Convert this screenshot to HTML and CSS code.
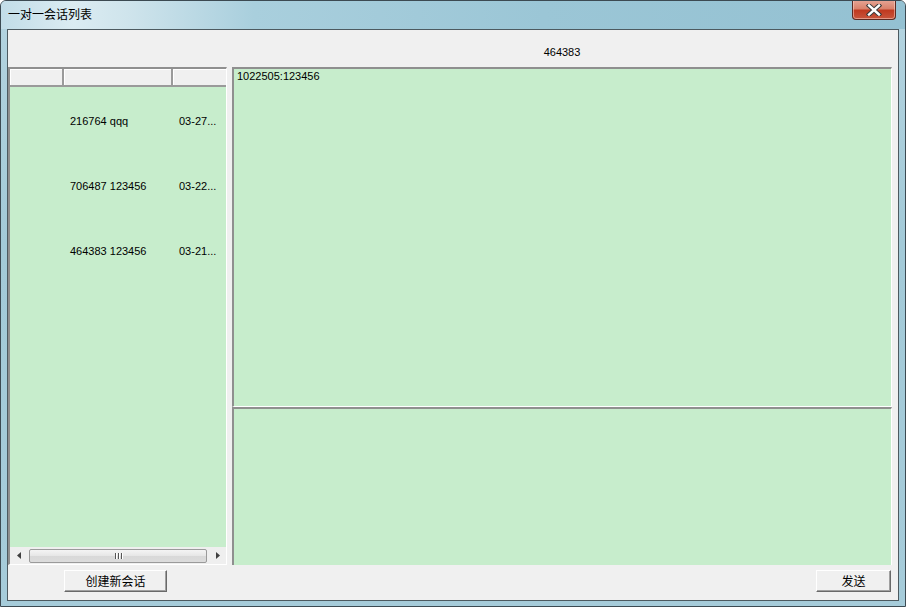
FILE: index.html
```html
<!DOCTYPE html>
<html>
<head>
<meta charset="utf-8">
<link rel="stylesheet" href="styles.css">
</head>
<body>
<div class="window">
  <div class="titlebar">
    <span class="title">一对一会话列表</span>
    <div class="close">
      <svg width="18" height="12" viewBox="0 0 18 12"><path d="M4 1.5 L14 10.5 M14 1.5 L4 10.5" stroke="#3a3a3a" stroke-width="4.4" stroke-linecap="square"/><path d="M4 1.5 L14 10.5 M14 1.5 L4 10.5" stroke="#ffffff" stroke-width="2.4" stroke-linecap="square"/></svg>
    </div>
  </div>
  <div class="client">
    <div class="header"><span class="peer">464383</span></div>
    <div class="main">
      <div class="list">
        <div class="list-head">
          <div class="hcell c1"></div>
          <div class="hcell c2"></div>
          <div class="hcell c3"></div>
        </div>
        <div class="rows">
          <div class="row"><span class="c1"></span><span class="c2">216764 qqq</span><span class="c3">03-27...</span></div>
          <div class="row"><span class="c1"></span><span class="c2">706487 123456</span><span class="c3">03-22...</span></div>
          <div class="row"><span class="c1"></span><span class="c2">464383 123456</span><span class="c3">03-21...</span></div>
        </div>
        <div class="hscroll">
          <div class="arrow"><svg width="4" height="7" viewBox="0 0 4 7"><path d="M4 0 L0 3.5 L4 7 Z" fill="#404040"/></svg></div>
          <div class="thumb"><span class="grip"></span><span class="grip"></span><span class="grip"></span></div>
          <div class="arrow"><svg width="4" height="7" viewBox="0 0 4 7"><path d="M0 0 L4 3.5 L0 7 Z" fill="#404040"/></svg></div>
        </div>
      </div>
      <div class="chat">
        <div class="history"><div class="msg">1022505:123456</div></div>
        <div class="input"></div>
      </div>
    </div>
    <div class="footer">
      <button class="btn create">创建新会话</button>
      <button class="btn send">发送</button>
    </div>
  </div>
</div>
</body>
</html>
```

FILE: styles.css
```css
html, body {
  margin: 0;
  padding: 0;
  background: #ffffff;
}
.window {
  width: 906px;
  height: 607px;
  box-sizing: border-box;
  border: 1px solid #3c4a52;
  border-radius: 6px 6px 0 0;
  background: linear-gradient(to bottom, #b4d4e0, #a3cad8 40%, #a6ccda);
  padding: 0 6px 5px 6px;
  display: flex;
  flex-direction: column;
  font-family: "Liberation Sans", Arial, "Noto Sans CJK SC", sans-serif;
  font-size: 11px;
  color: #000;
  overflow: hidden;
}
.titlebar {
  height: 28px;
  margin: 0 -6px;
  padding: 0 0 0 7px;
  display: flex;
  align-items: flex-start;
  position: relative;
  background: linear-gradient(to right, #c2dde8 0%, #dbecf2 8%, #cfe4ec 14%, #a9cfdd 28%, #9bc6d6 60%, #94c1d2 100%);
}
.title {
  font-family: "Noto Sans CJK SC", sans-serif;
  font-size: 12px;
  line-height: 14px;
  margin-top: 6px;
  color: #000;
}
.close {
  position: absolute;
  right: 9px;
  top: -1px;
  width: 44px;
  height: 20px;
  box-sizing: border-box;
  border: 1px solid #5c2a22;
  border-top: none;
  border-radius: 0 0 4px 4px;
  background: linear-gradient(to bottom, #e7a696 0%, #d9826c 45%, #c03a20 55%, #c8553c 100%);
  box-shadow: inset 0 0 0 1px rgba(255,220,210,0.5);
  display: flex;
  align-items: center;
  justify-content: center;
}
.client {
  flex: 1;
  border: 1px solid #4d5a60;
  background: #f0f0f0;
  display: flex;
  flex-direction: column;
}
.header {
  height: 37px;
  display: flex;
  align-items: center;
  padding-left: 224px;
  padding-right: 6px;
}
.peer {
  flex: 1;
  text-align: center;
  margin-top: 7px;
}
.main {
  height: 498px;
  display: flex;
  gap: 5px;
  padding-right: 6px;
}
.list {
  width: 219px;
  box-sizing: border-box;
  border-top: 2px solid #8f8f8f;
  border-left: 2px solid #8f8f8f;
  border-right: 1px solid #ffffff;
  border-bottom: 1px solid #ffffff;
  background: #c7edcc;
  display: flex;
  flex-direction: column;
}
.list-head {
  height: 18px;
  display: flex;
  background: #f0f0f0;
}
.hcell {
  box-sizing: border-box;
  height: 18px;
  border-right: 2px solid #9a9a9a;
  border-bottom: 2px solid #9a9a9a;
  box-shadow: inset 1px 1px 0 #ffffff;
  background: #f0f0f0;
}
.hcell.c1 { width: 54px; }
.hcell.c2 { width: 109px; }
.hcell.c3 { width: 53px; border-right: none; }
.rows {
  flex: 1;
  padding-top: 1px;
}
.row {
  height: 65px;
  display: flex;
  align-items: center;
}
.row .c1 { width: 54px; }
.row .c2 { width: 109px; padding-left: 6px; box-sizing: border-box; }
.row .c3 { width: 53px; padding-left: 6px; box-sizing: border-box; }
.hscroll {
  height: 17px;
  background: #efefef;
  display: flex;
  align-items: center;
}
.arrow {
  width: 17px;
  height: 17px;
  display: flex;
  align-items: center;
  justify-content: center;
}
.thumb {
  flex: 1;
  height: 14px;
  box-sizing: border-box;
  margin: 0 2px;
  border: 1px solid #9a9a9a;
  border-radius: 2px;
  background: linear-gradient(to bottom, #f4f4f4, #e6e6e6 50%, #d8d8d8 51%, #dcdcdc);
  display: flex;
  justify-content: center;
  align-items: center;
  gap: 1px;
}
.grip {
  width: 1px;
  height: 6px;
  background: #555;
  box-shadow: 1px 0 0 #fff;
  margin: 0 0.5px;
}
.chat {
  flex: 1;
  display: flex;
  flex-direction: column;
}
.history {
  height: 340px;
  box-sizing: border-box;
  border-top: 2px solid #8f8f8f;
  border-left: 2px solid #8f8f8f;
  border-right: 1px solid #ffffff;
  border-bottom: 1px solid #ffffff;
  background: #c7edcc;
  padding: 1px 3px;
}
.msg {
  line-height: 13px;
}
.input {
  flex: 1;
  box-sizing: border-box;
  border-top: 2px solid #8f8f8f;
  border-left: 2px solid #8f8f8f;
  border-right: 1px solid #ffffff;
  background: #c7edcc;
}
.footer {
  flex: 1;
  display: flex;
  align-items: flex-start;
  justify-content: space-between;
  padding: 5px 7px 0 56px;
}
.btn {
  height: 22px;
  box-sizing: border-box;
  border: 1px solid #ffffff;
  border-right-color: #696969;
  border-bottom-color: #696969;
  box-shadow: inset -1px -1px 0 #a0a0a0;
  background: #f0f0f0;
  font-family: "Noto Sans CJK SC", sans-serif;
  font-size: 12px;
  line-height: 18px;
  padding: 0;
  color: #000;
}
.create { width: 103px; }
.send { width: 75px; }
```
